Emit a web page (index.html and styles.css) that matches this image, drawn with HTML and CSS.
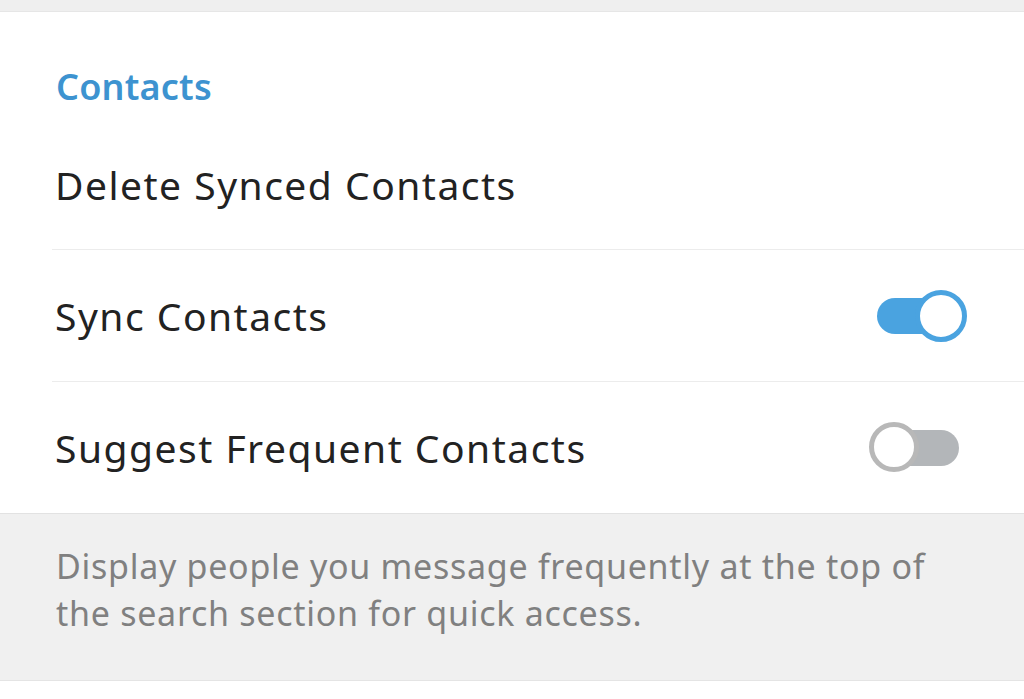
FILE: index.html
```html
<!DOCTYPE html>
<html>
<head>
<meta charset="utf-8">
<link rel="stylesheet" href="styles.css">
</head>
<body>
<div class="top-strip"></div>
<section class="card">
  <div class="section-title">Contacts</div>
  <div class="row first">
    <span class="label">Delete Synced Contacts</span>
  </div>
  <div class="row">
    <span class="label">Sync Contacts</span>
    <span class="toggle on"><span class="knob"></span></span>
  </div>
  <div class="row">
    <span class="label">Suggest Frequent Contacts</span>
    <span class="toggle off"><span class="knob"></span></span>
  </div>
</section>
<section class="note">
  <p>Display people you message frequently at the top of the search section for quick access.</p>
</section>
<div class="bottom"></div>
</body>
</html>
```
FILE: styles.css
```css
* { box-sizing: border-box; }
html, body { margin: 0; padding: 0; }
body {
  width: 1024px;
  height: 699px;
  overflow: hidden;
  background: #ffffff;
  font-family: "Noto Sans", "Liberation Sans", sans-serif;
}
.top-strip {
  height: 12px;
  background: #efefef;
  border-bottom: 1px solid #e6e6e6;
}
.card {
  background: #fff;
  border-bottom: 1px solid #e2e2e2;
}
.section-title {
  padding-left: 56px;
  height: 111px;
  padding-top: 55px;
  font-size: 36px;
  line-height: 40px;
  font-weight: 600;
  letter-spacing: 0.2px;
  color: #3d93d0;
}
.row {
  display: flex;
  align-items: center;
  justify-content: space-between;
  height: 132px;
  margin-left: 52px;
  padding-left: 3px;
  padding-right: 56px;
  border-top: 1px solid #ececec;
}
.row.first {
  border-top: none;
  height: 126px;
  padding-bottom: 4px;
}
.label {
  font-size: 39px;
  letter-spacing: 1.5px;
  color: #222222;
}
.toggle {
  position: relative;
  display: block;
  width: 90px;
  height: 52px;
}
.toggle .knob {
  position: absolute;
  top: 0;
  width: 52px;
  height: 52px;
  border-radius: 50%;
  background: #fff;
}
.toggle::before {
  content: "";
  position: absolute;
  top: 8px;
  height: 36px;
  border-radius: 18px;
}
.toggle.on { margin-right: 1px; }
.toggle.on::before {
  left: 0;
  width: 80px;
  background: #4aa3e0;
}
.toggle.on .knob {
  right: 0;
  border: 5px solid #4aa3e0;
}
.toggle.off { margin-right: 9px; }
.toggle.off::before {
  right: 0;
  width: 70px;
  background: #b3b6b9;
}
.toggle.off .knob {
  left: 0;
  border: 5px solid #b8b8b8;
  width: 50px;
  height: 50px;
}
.note {
  background: #f0f0f0;
  height: 167px;
  padding: 29px 56px 0 56px;
  border-bottom: 1px solid #e4e4e4;
}
.note p {
  margin: 0;
  font-size: 34px;
  line-height: 47px;
  letter-spacing: 0.72px;
  color: #808080;
}
.bottom { height: 20px; background: #fff; }
```
